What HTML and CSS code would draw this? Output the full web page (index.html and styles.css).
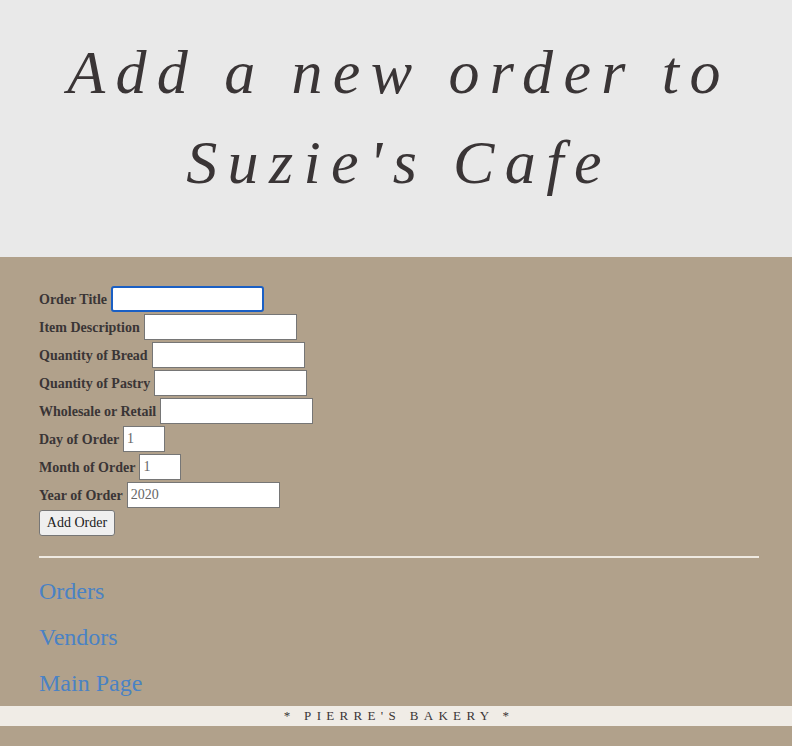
FILE: index.html
```html
<!DOCTYPE html>
<html>
<head>
<meta charset="utf-8">
<title>Add Order</title>
<link rel="stylesheet" href="styles.css">
</head>
<body>
<header class="hero">
  <h1 class="hero-title">Add a new order to<br>Suzie's Cafe</h1>
</header>
<main class="content">
  <form class="order-form">
    <div class="row"><label class="lbl">Order Title</label><input class="field field-focus" type="text"></div>
    <div class="row"><label class="lbl">Item Description</label><input class="field" type="text"></div>
    <div class="row"><label class="lbl">Quantity of Bread</label><input class="field" type="text"></div>
    <div class="row"><label class="lbl">Quantity of Pastry</label><input class="field" type="text"></div>
    <div class="row"><label class="lbl">Wholesale or Retail</label><input class="field" type="text"></div>
    <div class="row"><label class="lbl">Day of Order</label><input class="field field-small" type="text" value="1"></div>
    <div class="row"><label class="lbl">Month of Order</label><input class="field field-small" type="text" value="1"></div>
    <div class="row"><label class="lbl">Year of Order</label><input class="field" type="text" value="2020"></div>
    <div class="row"><button class="btn" type="button">Add Order</button></div>
  </form>
  <hr class="divider">
  <nav class="links">
    <p class="link-row"><a href="#">Orders</a></p>
    <p class="link-row"><a href="#">Vendors</a></p>
    <p class="link-row"><a href="#">Main Page</a></p>
  </nav>
</main>
<footer class="footer">* PIERRE'S BAKERY *</footer>
</body>
</html>
```
FILE: styles.css
```css
html, body {
  margin: 0;
  padding: 0;
  background: #b1a18b;
  font-family: "Liberation Serif", "Times New Roman", serif;
  color: #3a3536;
}
.hero {
  background: #e9e9e9;
  height: 257px;
  box-sizing: border-box;
  padding-top: 27px;
}
.hero-title {
  margin: 0;
  text-align: center;
  font-style: italic;
  font-weight: normal;
  font-size: 62px;
  line-height: 90px;
  letter-spacing: 10.4px;
  padding-left: 6px;
  color: #3a3536;
}
.content {
  padding: 29px 33px 0 39px;
}
.order-form {
  display: flex;
  flex-direction: column;
  gap: 2px;
}
.row {
  display: flex;
  align-items: center;
  height: 26px;
}
.lbl {
  font-weight: bold;
  font-size: 14px;
  margin-right: 4px;
  padding-top: 2px;
}
.field {
  box-sizing: border-box;
  width: 153px;
  height: 26px;
  border: 1px solid #767676;
  background: #fff;
  font-family: "Liberation Serif", serif;
  font-size: 14px;
  padding: 1px 3px;
  color: #666;
  border-radius: 0;
}
.field-focus {
  border: 2px solid #1a5fc4;
  border-radius: 3px;
}
.field-small {
  width: 42px;
}
.btn {
  box-sizing: border-box;
  height: 26px;
  width: 76px;
  font-family: "Liberation Serif", serif;
  font-size: 14px;
  color: #222;
  background: #efefef;
  border: 1px solid #767676;
  border-radius: 3px;
  padding: 0;
}
.divider {
  margin: 20px 0 0 0;
  border: none;
  height: 2px;
  background: #efeae2;
}
.links {
  padding-top: 10px;
}
.link-row {
  margin: 0;
  height: 46px;
  font-size: 24px;
  line-height: 46px;
}
.link-row a {
  color: #4a82c4;
  text-decoration: none;
}
.footer {
  background: #f0ece6;
  height: 20px;
  line-height: 20px;
  text-align: center;
  font-size: 13px;
  letter-spacing: 0.41em;
  padding-left: 6px;
  color: #3a3536;
}
```
